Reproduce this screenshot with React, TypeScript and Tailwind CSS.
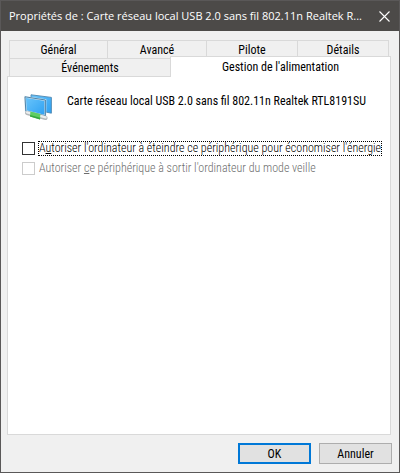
import React, { useState } from 'react';

const NetworkIcon: React.FC = () => (
  <svg width="31" height="28" viewBox="0 0 31 28" className="shrink-0" aria-hidden="true">
    <defs>
      <linearGradient id="screen" x1="0" y1="0" x2="1" y2="1">
        <stop offset="0" stopColor="#6cc6fb" />
        <stop offset="1" stopColor="#2b9ff2" />
      </linearGradient>
    </defs>
    <path d="M9 1.8 L29.4 4.4 V20.2 L9 16 Z" fill="url(#screen)" stroke="#4f87b0" strokeWidth="0.9" />
    <path d="M3 3.8 L23.4 7 V22.8 L3.8 18.2 Z" fill="url(#screen)" stroke="#dbe7ee" strokeWidth="1.8" />
    <path d="M3 3.8 L23.4 7 V22.8 L3.8 18.2 Z" fill="none" stroke="#3b78a3" strokeWidth="0.9" />
    <path d="M5 20 L23.6 25" stroke="#b3b8ba" strokeWidth="4" strokeLinecap="round" />
    <path d="M5 19.4 L23.6 24.4" stroke="#eceeee" strokeWidth="2.2" strokeLinecap="round" />
    <path d="M8.4 18.4 L18.4 21 L18 26.4 L8 23.6 Z" fill="#5fce62" />
    <path d="M8.2 22 L18.2 24.8 L18 26.4 L8 23.6 Z" fill="#35a740" />
  </svg>
);

const backTabs = ['Général', 'Avancé', 'Pilote', 'Détails'];

const tabClass = 'border-t border-l border-[#d9d9d9] bg-[#f0f0f0] text-center';

const App: React.FC = () => {
  const [allowOff, setAllowOff] = useState(false);

  return (
    <div className="flex min-h-screen flex-col border border-[#5a5858] bg-[#f0f0f0] font-['Roboto_Condensed','Roboto',sans-serif] text-[12px] leading-4 text-black">
      <header className="flex h-[30px] items-center bg-[#4c4a48] pr-[7px] pl-2 text-white">
        <h1 className="min-w-0 flex-1 truncate font-['Open_Sans','Noto_Sans',sans-serif] text-[11px] font-normal">
          Propriétés de : Carte réseau local USB 2.0 sans fil 802.11n Realtek R...
        </h1>
        <button type="button" aria-label="Fermer" className="flex h-5 w-4 items-center justify-center">
          <svg width="11" height="11" viewBox="0 0 11 11" stroke="#ffffff" strokeWidth="1.1">
            <path d="M0.5 0.5 L10.5 10.5 M10.5 0.5 L0.5 10.5" />
          </svg>
        </button>
      </header>

      <main className="flex flex-1 flex-col pt-[9px] pr-2 pb-2 pl-1.5">
        <div role="tablist">
          <div className="grid grid-cols-[98fr_99fr_91fr_92fr] px-0.5">
            {backTabs.map((name) => (
              <button
                key={name}
                type="button"
                role="tab"
                aria-selected={false}
                className={`${tabClass} h-[18px] last:border-r`}
              >
                {name}
              </button>
            ))}
          </div>
          <div className="-mt-0.5 grid grid-cols-[161fr_221fr] items-end pl-0.5">
            <button type="button" role="tab" aria-selected={false} className={`${tabClass} h-[18px]`}>
              Événements
            </button>
            <button
              type="button"
              role="tab"
              aria-selected={true}
              className="relative -mb-px h-[21px] border-t border-r border-l border-[#d9d9d9] bg-white text-center"
            >
              Gestion de l'alimentation
            </button>
          </div>
        </div>

        <section role="tabpanel" className="flex-1 border border-[#d9d9d9] bg-white px-3.5 pt-4">
          <div className="flex items-start gap-3.5">
            <NetworkIcon />
            <p>Carte réseau local USB 2.0 sans fil 802.11n Realtek RTL8191SU</p>
          </div>
          <div className="mt-[19px] flex flex-col gap-1 font-light">
            <label className="flex h-4 items-center gap-[3px] whitespace-nowrap">
              <input
                type="checkbox"
                checked={allowOff}
                onChange={(e) => setAllowOff(e.target.checked)}
                className="h-[13px] w-[13px] shrink-0 appearance-none border border-[#333333] bg-white checked:bg-[#333333]"
              />
              <span className="border border-dotted border-black leading-[13px]">
                A<u>u</u>toriser l'ordinateur à éteindre ce périphérique pour économiser l'énergie
              </span>
            </label>
            <label className="flex h-4 items-center gap-1 whitespace-nowrap text-[#6d6d6d]">
              <input
                type="checkbox"
                disabled
                className="h-[13px] w-[13px] shrink-0 appearance-none border border-[#cccccc] bg-white"
              />
              <span>
                Autoriser <u>c</u>e périphérique à sortir l'ordinateur du mode veille
              </span>
            </label>
          </div>
        </section>

        <footer className="-mr-px mt-2 flex justify-end gap-2">
          <button type="button" className="flex h-[21px] w-[73px] items-center justify-center border-2 border-[#0078d7] bg-[#e1e1e1]">
            OK
          </button>
          <button type="button" className="flex h-[21px] w-[73px] items-center justify-center border border-[#adadad] bg-[#e1e1e1]">
            Annuler
          </button>
        </footer>
      </main>
    </div>
  );
};

export default App;
